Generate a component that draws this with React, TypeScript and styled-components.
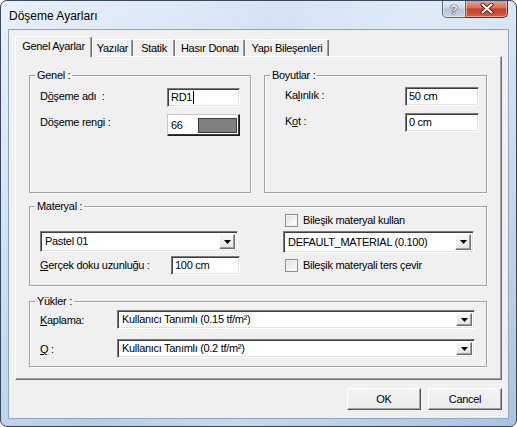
import React from "react";
import styled, { createGlobalStyle } from "styled-components";

const GlobalStyle = createGlobalStyle`
  html, body {
    margin: 0;
    padding: 0;
    background: #ffffff;
  }
  * {
    box-sizing: border-box;
  }
`;

const FONT = `"Liberation Sans", Arial, sans-serif`;

const Window = styled.div`
  width: 517px;
  height: 427px;
  display: flex;
  flex-direction: column;
  border: 1px solid #37475c;
  border-radius: 7px;
  overflow: hidden;
  background: linear-gradient(
      115deg,
      rgba(255, 255, 255, 0.55) 0%,
      rgba(255, 255, 255, 0.15) 40%,
      rgba(255, 255, 255, 0.35) 60%,
      rgba(255, 255, 255, 0) 100%
    ),
    linear-gradient(to bottom, #cfe0f3 0%, #bcd3ec 40%, #a9c3e3 100%);
  font-family: ${FONT};
  font-size: 11px;
  letter-spacing: -0.3px;
  color: #000;
`;

const TitleBar = styled.div`
  height: 28px;
  flex: none;
  display: flex;
  justify-content: space-between;
  align-items: flex-start;
  padding-left: 8px;
`;

const Title = styled.span`
  font-size: 12px;
  letter-spacing: 0;
  line-height: 14px;
  margin-top: 8px;
  color: #000;
`;

const CaptionButtons = styled.div`
  display: flex;
  margin-top: -1px;
  margin-right: 8px;
`;

const CaptionButton = styled.div<{ $close?: boolean }>`
  width: ${(p) => (p.$close ? 42 : 24)}px;
  height: 18px;
  display: flex;
  align-items: center;
  justify-content: center;
  border: 1px solid ${(p) => (p.$close ? "#5a2a22" : "#566476")};
  border-top: none;
  border-left: ${(p) => (p.$close ? "none" : undefined)};
  border-radius: ${(p) => (p.$close ? "0 0 5px 0" : "0 0 0 5px")};
  background: ${(p) =>
    p.$close
      ? "linear-gradient(to bottom, #e7a898 0%, #d86d5a 48%, #c43c24 52%, #d5603e 100%)"
      : "linear-gradient(to bottom, #e6edf5 0%, #cdd9e6 48%, #b4c4d6 52%, #c6d5e4 100%)"};
  box-shadow: inset 0 0 0 1px rgba(255, 255, 255, 0.45);
`;

const HelpGlyph = styled.span`
  font-family: ${FONT};
  font-weight: bold;
  font-size: 13px;
  letter-spacing: 0;
  color: #f4f6f8;
  text-shadow: 0 0 1px #333, 0 0 1px #333, 0 0 1px #333;
  margin-top: 1px;
`;

const Client = styled.div`
  flex: 1;
  margin: 0 7px 7px 7px;
  border: 1px solid #8fa4bf;
  background: #f0f0f0;
  padding: 6px 6px 6px 6px;
  display: flex;
  flex-direction: column;
`;

const TabStrip = styled.div`
  height: 20px;
  display: flex;
  align-items: flex-end;
  position: relative;
  z-index: 1;
`;

const Tab = styled.div<{ $w: number; $active?: boolean }>`
  width: ${(p) => p.$w}px;
  height: ${(p) => (p.$active ? 21 : 17)}px;
  margin-bottom: ${(p) => (p.$active ? -1 : 0)}px;
  display: flex;
  align-items: center;
  justify-content: center;
  padding-bottom: ${(p) => (p.$active ? 2 : 0)}px;
  background: #f0f0f0;
  border-top: 1px solid #ffffff;
  border-left: 1px solid #ffffff;
  border-right: 1px solid #6e6e6e;
  box-shadow: inset -1px 0 0 #a0a0a0;
  border-radius: 2px 2px 0 0;
  white-space: nowrap;
`;

const Panel = styled.div`
  flex: 1;
  border-top: 1px solid #ffffff;
  border-left: 1px solid #ffffff;
  border-right: 1px solid #6e6e6e;
  border-bottom: 1px solid #6e6e6e;
  box-shadow: inset -1px -1px 0 #a0a0a0;
  padding: 18px 14px 0 13px;
  display: flex;
  flex-direction: column;
`;

const TopRow = styled.div`
  display: grid;
  grid-template-columns: 222px 223px;
  column-gap: 13px;
`;

const Group = styled.div<{ $h: number; $mt?: number; $pad: string }>`
  position: relative;
  height: ${(p) => p.$h}px;
  margin-top: ${(p) => p.$mt ?? 0}px;
  border: 1px solid #a0a0a0;
  box-shadow: inset 1px 1px 0 #ffffff, 1px 1px 0 #ffffff;
  padding: ${(p) => p.$pad};
`;

const Legend = styled.span`
  position: absolute;
  top: -7px;
  left: 5px;
  padding: 0 2px;
  line-height: 13px;
  background: #f0f0f0;
`;

const FieldRow = styled.div<{ $gap?: number }>`
  display: flex;
  justify-content: space-between;
  align-items: flex-start;
  margin-top: ${(p) => p.$gap ?? 0}px;
`;

const Label = styled.span<{ $top?: number }>`
  line-height: 13px;
  padding-top: ${(p) => p.$top ?? 2}px;
  white-space: nowrap;
`;

const TextBox = styled.div<{ $w: number; $h?: number }>`
  width: ${(p) => p.$w}px;
  height: ${(p) => p.$h ?? 19}px;
  background: #ffffff;
  border: 1px solid;
  border-color: #7a7a7a #ffffff #ffffff #7a7a7a;
  box-shadow: inset 1px 1px 0 #404040, inset -1px -1px 0 #e3e3e3;
  display: flex;
  align-items: center;
  padding-left: 3px;
  line-height: 13px;
  white-space: nowrap;
`;

const Caret = styled.span`
  display: inline-block;
  width: 1px;
  height: 13px;
  background: #000;
  margin-left: 1px;
`;

const ColorBox = styled.div`
  width: 73px;
  height: 22px;
  display: flex;
  align-items: center;
  background: #ffffff;
  border: 1px solid;
  border-color: #c8c8c8 #1e1e1e #1e1e1e #c8c8c8;
  box-shadow: inset -1px -1px 0 #3a3a3a, inset 1px 1px 0 #ffffff;
  padding: 2px 2px 2px 3px;
`;

const ColorCode = styled.span`
  width: 27px;
  line-height: 13px;
`;

const Swatch = styled.div<{ $color: string }>`
  flex: 1;
  height: 15px;
  background: ${(p) => p.$color};
  border: 1px solid #3c3c3c;
`;

const MaterialGrid = styled.div`
  display: grid;
  grid-template-columns: 200px 191px;
  grid-template-rows: 13px 21px 19px;
  column-gap: 43px;
  row-gap: 4px;
  & > :nth-child(n + 3) {
    margin-top: 0;
  }
`;

const Spacer = styled.div``;

const DepthRow = styled.div`
  display: flex;
  justify-content: space-between;
  align-items: center;
  margin-top: 3px;
`;

const CheckRow = styled.label<{ $self?: string }>`
  display: flex;
  align-items: center;
  gap: 5px;
  padding-left: 2px;
  align-self: ${(p) => p.$self ?? "center"};
  margin-top: ${(p) => (p.$self === "center" ? 3 : 0)}px;
  line-height: 13px;
  white-space: nowrap;
`;

const CheckBox = styled.span`
  width: 13px;
  height: 13px;
  flex: none;
  border: 1px solid #8e8f8f;
  background: linear-gradient(135deg, #dcdcdc 0%, #f4f4f4 60%, #ffffff 100%);
  box-shadow: inset 0 0 0 1px #f4f4f4;
`;

const Select = styled.div<{ $w?: number; $h: number }>`
  width: ${(p) => (p.$w ? `${p.$w}px` : "100%")};
  height: ${(p) => p.$h}px;
  background: #ffffff;
  border: 1px solid;
  border-color: #7a7a7a #ffffff #ffffff #7a7a7a;
  box-shadow: inset 1px 1px 0 #404040, inset -1px -1px 0 #e3e3e3;
  display: flex;
  align-items: center;
  padding: 2px 2px 2px 4px;
  line-height: 13px;
  white-space: nowrap;
`;

const SelectText = styled.span`
  flex: 1;
`;

const DropButton = styled.div`
  width: 16px;
  align-self: stretch;
  display: flex;
  align-items: center;
  justify-content: center;
  background: linear-gradient(to bottom, #f6f6f6, #e4e4e4);
  border: 1px solid;
  border-color: #ffffff #6e6e6e #6e6e6e #ffffff;
  box-shadow: inset -1px -1px 0 #a0a0a0;
`;

const LoadGrid = styled.div`
  display: grid;
  grid-template-columns: 77px 1fr;
  row-gap: 10px;
`;

const ButtonRow = styled.div`
  display: flex;
  justify-content: flex-end;
  gap: 7px;
  padding: 8px 0 2px 0;
`;

const PushButton = styled.button`
  width: 74px;
  height: 22px;
  font-family: ${FONT};
  font-size: 11px;
  letter-spacing: -0.3px;
  color: #000;
  background: linear-gradient(to bottom, #f4f4f4, #ebebeb);
  border: 1px solid;
  border-color: #ffffff #555555 #555555 #ffffff;
  box-shadow: inset -1px -1px 0 #a0a0a0, 0 0 0 0 transparent;
  padding: 0;
`;

const Arrow: React.FC = () => (
  <svg width="7" height="4" viewBox="0 0 7 4">
    <polygon points="0,0 7,0 3.5,4" fill="#000" />
  </svg>
);

const CloseGlyph: React.FC = () => (
  <svg width="14" height="11" viewBox="0 0 14 11">
    <path d="M2.5 1.5 L11.5 9.5 M11.5 1.5 L2.5 9.5" stroke="#5b2118" strokeWidth="4" strokeLinecap="round" />
    <path d="M2.5 1.5 L11.5 9.5 M11.5 1.5 L2.5 9.5" stroke="#ffffff" strokeWidth="2" strokeLinecap="round" />
  </svg>
);

const Dropdown: React.FC<{ value: string; w?: number; h: number }> = ({ value, w, h }) => (
  <Select $w={w} $h={h}>
    <SelectText>{value}</SelectText>
    <DropButton>
      <Arrow />
    </DropButton>
  </Select>
);

const tabs = [
  { label: "Genel Ayarlar", w: 77, active: true },
  { label: "Yazılar", w: 41 },
  { label: "Statik", w: 42 },
  { label: "Hasır Donatı", w: 70 },
  { label: "Yapı Bileşenleri", w: 84 },
];

const App: React.FC = () => {
  return (
    <>
      <GlobalStyle />
      <Window>
        <TitleBar>
          <Title>Döşeme Ayarları</Title>
          <CaptionButtons>
            <CaptionButton>
              <HelpGlyph>?</HelpGlyph>
            </CaptionButton>
            <CaptionButton $close>
              <CloseGlyph />
            </CaptionButton>
          </CaptionButtons>
        </TitleBar>

        <Client>
          <TabStrip>
            {tabs.map((t) => (
              <Tab key={t.label} $w={t.w} $active={t.active}>
                {t.label}
              </Tab>
            ))}
          </TabStrip>

          <Panel>
            <TopRow>
              <Group $h={118} $pad="12px 10px 0 10px">
                <Legend>Genel :</Legend>
                <FieldRow>
                  <Label>
                    D<u>ö</u>şeme adı&nbsp; :
                  </Label>
                  <TextBox $w={73}>
                    RD1
                    <Caret />
                  </TextBox>
                </FieldRow>
                <FieldRow $gap={7}>
                  <Label>Döşeme rengi :</Label>
                  <ColorBox>
                    <ColorCode>66</ColorCode>
                    <Swatch $color="#808080" />
                  </ColorBox>
                </FieldRow>
              </Group>

              <Group $h={118} $pad="11px 7px 0 20px">
                <Legend>Boyutlar :</Legend>
                <FieldRow>
                  <Label>
                    Ka<u>l</u>ınlık :
                  </Label>
                  <TextBox $w={74}>50 cm</TextBox>
                </FieldRow>
                <FieldRow $gap={7}>
                  <Label>
                    K<u>o</u>t :
                  </Label>
                  <TextBox $w={74}>0 cm</TextBox>
                </FieldRow>
              </Group>
            </TopRow>

            <Group $h={80} $mt={13} $pad="7px 11px 0 10px">
              <Legend>Materyal :</Legend>
              <MaterialGrid>
                <Spacer />
                <CheckRow>
                  <CheckBox />
                  Bileşik materyal kullan
                </CheckRow>
                <Dropdown value="Pastel 01" w={198} h={21} />
                <Dropdown value="DEFAULT_MATERIAL (0.100)" h={22} />
                <DepthRow>
                  <Label $top={0}>
                    <u>G</u>erçek doku uzunluğu :
                  </Label>
                  <TextBox $w={69}>100 cm</TextBox>
                </DepthRow>
                <CheckRow $self="center">
                  <CheckBox />
                  Bileşik materyali ters çevir
                </CheckRow>
              </MaterialGrid>
            </Group>

            <Group $h={66} $mt={15} $pad="8px 11px 0 10px">
              <Legend>Yükler :</Legend>
              <LoadGrid>
                <Label $top={4}>
                  <u>K</u>aplama:
                </Label>
                <Dropdown value="Kullanıcı Tanımlı (0.15 tf/m²)" h={19} />
                <Label $top={4}>
                  <u>Q</u> :
                </Label>
                <Dropdown value="Kullanıcı Tanımlı (0.2 tf/m²)" h={19} />
              </LoadGrid>
            </Group>
          </Panel>

          <ButtonRow>
            <PushButton>OK</PushButton>
            <PushButton>Cancel</PushButton>
          </ButtonRow>
        </Client>
      </Window>
    </>
  );
};

export default App;
